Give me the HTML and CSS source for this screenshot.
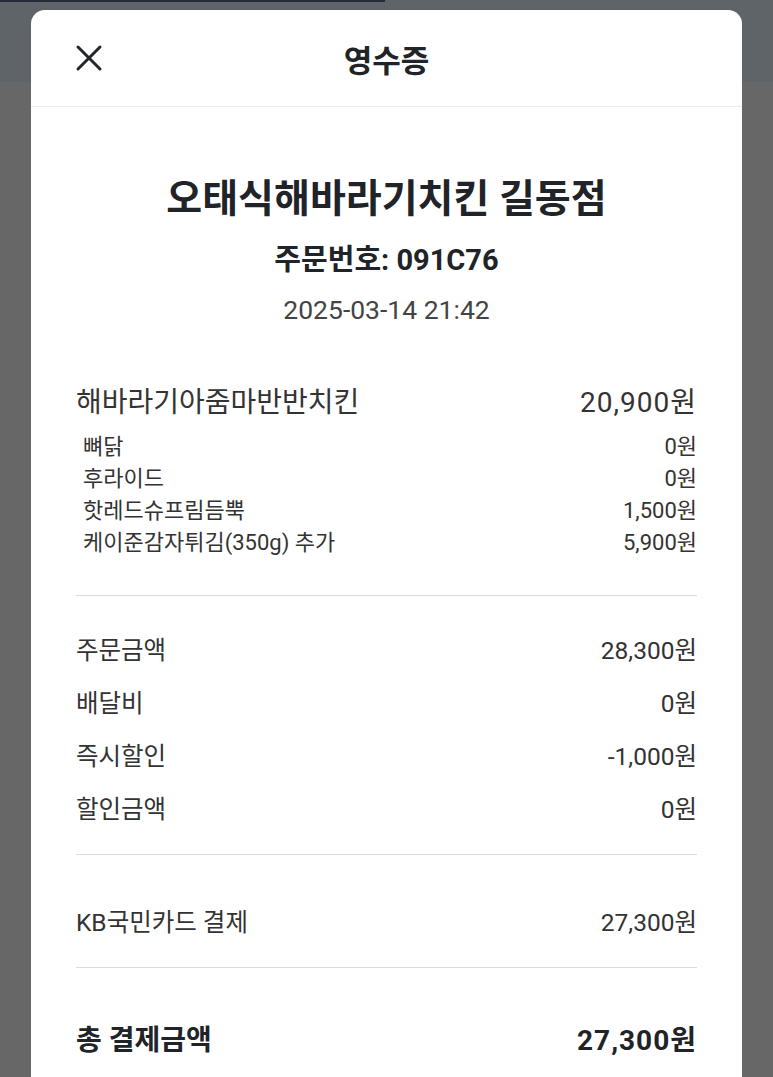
FILE: index.html
```html
<!DOCTYPE html>
<html lang="ko">
  <head>
    <meta charset="UTF-8">
    <title>영수증</title>
    <link rel="stylesheet" href="styles.css">
  </head>
  <body>
    <div class="sheet">
      <!-- header -->
      <div class="sheet-header">
        <button class="close-btn" aria-label="닫기">
          <svg width="28" height="28" viewBox="0 0 28 28">
            <path d="M3 3 L25 25 M25 3 L3 25" stroke="#23262b" stroke-width="3" stroke-linecap="round" fill="none" />
          </svg>
        </button>
        <h1 class="sheet-title">영수증</h1>
        <span class="header-spacer"></span>
      </div>

      <div class="receipt">
        <div class="store">
          <h2 class="store-name">오태식해바라기치킨 길동점</h2>
          <div class="order-no">주문번호: 091C76</div>
          <div class="order-date">2025-03-14 21:42</div>
        </div>

        <!-- menu -->
        <div class="section menu">
          <div class="menu-row">
            <span>해바라기아줌마반반치킨</span>
            <span class="price">20,900원</span>
          </div>
          <div class="option-row">
            <span>뼈닭</span>
            <span>0원</span>
          </div>
          <div class="option-row">
            <span>후라이드</span>
            <span>0원</span>
          </div>
          <div class="option-row">
            <span>핫레드슈프림듬뿍</span>
            <span>1,500원</span>
          </div>
          <div class="option-row">
            <span>케이준감자튀김(350g) 추가</span>
            <span>5,900원</span>
          </div>
        </div>

        <!-- amounts -->
        <div class="section amounts">
          <div class="line-row">
            <span>주문금액</span>
            <span>28,300원</span>
          </div>
          <div class="line-row">
            <span>배달비</span>
            <span>0원</span>
          </div>
          <div class="line-row">
            <span>즉시할인</span>
            <span>-1,000원</span>
          </div>
          <div class="line-row">
            <span>할인금액</span>
            <span>0원</span>
          </div>
        </div>

        <!-- payment -->
        <div class="section payment">
          <div class="line-row">
            <span>KB국민카드 결제</span>
            <span>27,300원</span>
          </div>
        </div>

        <div class="total-row">
          <span>총 결제금액</span>
          <span class="price">27,300원</span>
        </div>
      </div>
    </div>
  </body>
</html>
```

FILE: styles.css
```css
html, body {
  margin: 0;
  height: 100%;
}

body {
  background:
    linear-gradient(#262936, #262936) 0 0 / 385px 2px no-repeat,
    linear-gradient(#5e6468 0, #5e6468 82px, #676767 82px);
  font-family: Roboto, "Noto Sans CJK KR", sans-serif;
  color: #2b2d31;
  overflow: hidden;
}

.sheet {
  margin: 10px 31px 0;
  background-color: #fff;
  border-radius: 14px 14px 0 0;
  min-height: 1200px;
}

.sheet-header {
  height: 96px;
  display: flex;
  align-items: center;
  justify-content: space-between;
  padding: 0 44px;
  border-bottom: 1px solid #ececec;
}

.close-btn {
  width: 28px;
  height: 28px;
  padding: 0;
  border: none;
  background: none;
  display: flex;
}

.header-spacer {
  width: 28px;
}

.sheet-title {
  margin: 0;
  font-size: 31px;
  font-weight: 700;
  color: #202328;
}

.receipt {
  padding: 70px 45px 60px;
}

.store {
  text-align: center;
}

.store-name {
  margin: 0;
  font-size: 39px;
  line-height: 44px;
  font-weight: 700;
  color: #202328;
}

.order-no {
  margin-top: 22px;
  font-size: 29px;
  line-height: 34px;
  font-weight: 700;
  color: #202328;
}

.order-date {
  margin-top: 17px;
  font-size: 26.5px;
  line-height: 32px;
  color: #444;
}

.section {
  border-bottom: 1px solid #dcdcdc;
}

.menu {
  padding: 60px 0 36px;
}

.menu-row {
  display: flex;
  justify-content: space-between;
  font-size: 28px;
  line-height: 34px;
  color: #333;
  margin-bottom: 11px;
}

/* wider digits on the big amounts */
.price {
  letter-spacing: 1px;
}

.option-row {
  display: flex;
  justify-content: space-between;
  font-size: 22px;
  line-height: 32px;
  color: #333;
  padding-left: 7px;
}

.amounts {
  padding: 28px 0 18px;
}

.payment {
  padding: 41px 0 18px;
}

.line-row {
  display: flex;
  justify-content: space-between;
  font-size: 24.5px;
  line-height: 53px;
  color: #333;
}

.total-row {
  display: flex;
  justify-content: space-between;
  margin-top: 53px;
  font-size: 28px;
  line-height: 40px;
  font-weight: 700;
  color: #202328;
}
```
